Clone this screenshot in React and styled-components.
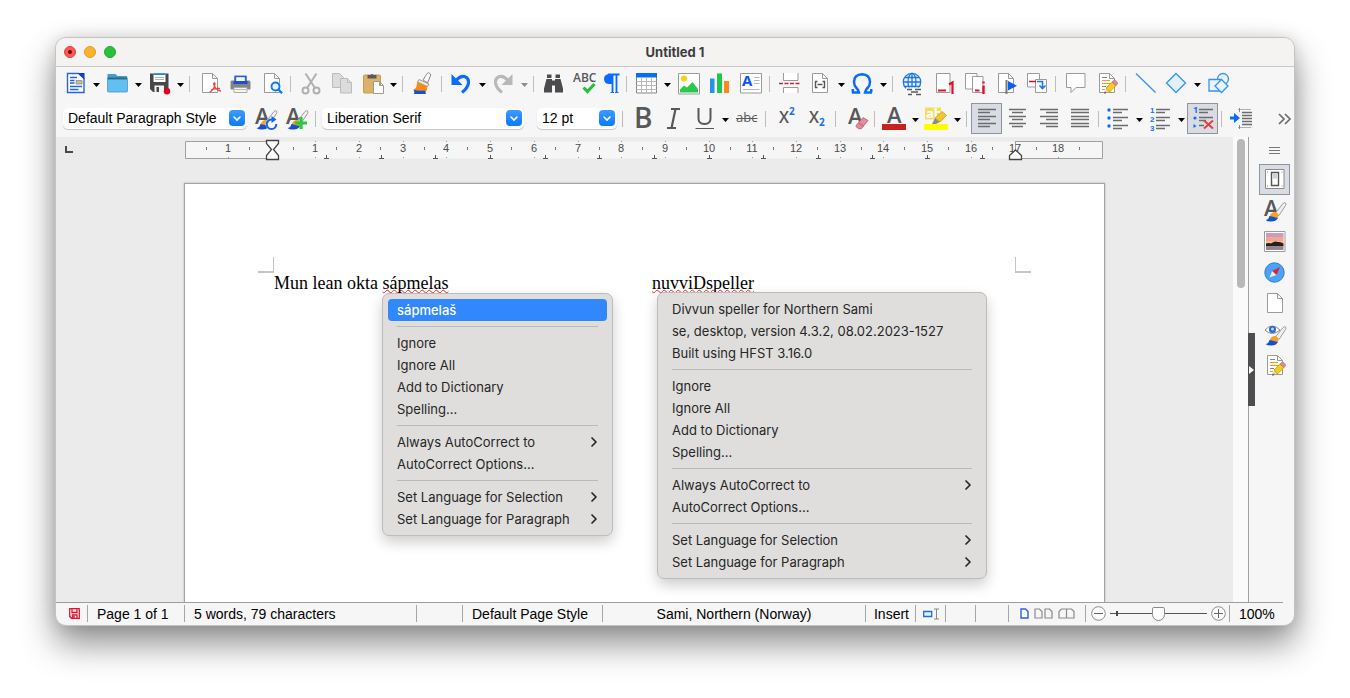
import React from "react";
import styled, { createGlobalStyle, css } from "styled-components";

const ui = `"Liberation Sans", Arial, sans-serif`;
const system = `Inter, "Liberation Sans", sans-serif`;
const glyph = `"Open Sans", "Noto Sans", sans-serif`;

const GlobalStyle = createGlobalStyle`
  *, *::before, *::after { box-sizing: border-box; }
  body { margin: 0; background: #fff; font-family: ${ui}; color: #000; }
  button, select, input { font: inherit; color: inherit; margin: 0; padding: 0; }
`;

const Desktop = styled.div`
  min-height: 100vh;
  padding: 37px 55px 73px;
  display: flex;
  overflow: hidden;
`;

const Window = styled.div`
  flex: 1;
  min-width: 0;
  display: flex;
  flex-direction: column;
  border: 1px solid #c3c3c3;
  border-radius: 11px;
  background: #f6f6f6;
  overflow: hidden;
  box-shadow: 0 18px 34px rgba(0, 0, 0, 0.44), 0 0 16px rgba(0, 0, 0, 0.12);
`;

const TitleBar = styled.header`
  height: 29px;
  flex: none;
  padding: 0 8px;
  display: grid;
  grid-template-columns: 1fr auto 1fr;
  align-items: center;
  background: #f4f3f1;
  border-bottom: 1px solid #c9c8c7;
`;

const Title = styled.h1`
  margin: 0;
  font: 700 13px/18px ${system};
  color: #3d3d3d;
`;

const Lights = styled.div`
  display: flex;
  gap: 8px;
`;

const Light = styled.button`
  width: 12px;
  height: 12px;
  border-radius: 50%;
  border: 1px solid ${(p) => p.$edge};
  background: ${(p) => p.$fill};
  display: grid;
  place-items: center;
  &::after {
    content: "";
    width: 4px;
    height: 4px;
    border-radius: 50%;
    background: ${(p) => p.$dot || "transparent"};
  }
`;

const Toolbar = styled.div`
  flex: none;
  height: ${(p) => (p.$tall ? 37 : 33)}px;
  padding: 0 0 0 4px;
  display: flex;
  align-items: center;
  background: #f6f6f6;
`;

const ToolButton = styled.button`
  flex: none;
  width: ${(p) => (p.$narrow ? 23 : 31)}px;
  height: 31px;
  display: grid;
  place-items: center;
  border: 1px solid transparent;
  background: none;
  ${(p) => p.$narrow && css`border-width: 0;`}
  ${(p) => p.$active && css`
    background: #d9dde3;
    border-color: #8f939b;
  `}
`;

const ArrowButton = styled.button`
  flex: none;
  width: 11px;
  height: 31px;
  padding-right: 1px;
  display: grid;
  place-items: center;
  border: 0;
  background: none;
  color: ${(p) => (p.$off ? "#8c8c8c" : "#000")};
`;

const Divider = styled.span`
  flex: none;
  width: 1px;
  height: 16px;
  margin: 0 4px 0 3px;
  background: #bdbdbd;
`;

const Picture = styled.svg`
  display: block;
  overflow: visible;
`;

const ComboBox = styled.label`
  flex: none;
  position: relative;
  display: flex;
  width: ${(p) => p.$width}px;
  margin: 0 ${(p) => p.$after}px 0 ${(p) => p.$before}px;
`;

const Select = styled.select`
  appearance: none;
  width: 100%;
  height: 21px;
  padding: 0 20px 1px 5px;
  border: 0;
  border-radius: 5px;
  background: #fff;
  box-shadow: 0 1px 1px rgba(0, 0, 0, 0.2);
  font-size: 14px;
`;

const Stepper = styled.span`
  position: absolute;
  right: 2px;
  top: 2px;
  width: 16px;
  height: 16px;
  border-radius: 4px;
  background: linear-gradient(#3d9bff, #0a7aff);
  display: grid;
  place-items: center;
  pointer-events: none;
`;

const Overflow = styled.button`
  width: 18px;
  height: 31px;
  margin-left: auto;
  display: grid;
  place-items: center;
  border: 0;
  background: none;
`;

const Workspace = styled.div`
  flex: 1;
  min-height: 465px;
  display: flex;
`;

const Canvas = styled.main`
  flex: 1;
  min-width: 0;
  position: relative;
  display: flex;
  flex-direction: column;
  align-items: center;
  background: #ebebeb;
  overflow: hidden;
`;

const TabCorner = styled.button`
  position: absolute;
  left: 9px;
  top: 9px;
  width: 8px;
  height: 7px;
  border: solid #4a4a4a;
  border-width: 0 0 2px 2px;
  background: none;
`;

const RulerStrip = styled.div`
  flex: none;
  width: 919px;
  max-width: 100%;
  height: 46px;
  padding-top: 3px;
`;

const Page = styled.article`
  position: relative;
  flex: 1;
  width: 921px;
  max-width: 100%;
  padding: 73px 73px 0;
  border: 1px solid #a3a3a3;
  border-bottom: 0;
  background: #fff;
  box-shadow: 0 0 2px rgba(0, 0, 0, 0.25);
`;

const Corners = styled.div`
  display: flex;
  justify-content: space-between;
`;

const Corner = styled.span`
  width: 16px;
  height: 16px;
  border: solid #c4c4c4;
  border-width: ${(p) => (p.$right ? "0 0 2px 1px" : "0 1px 2px 0")};
`;

const TextLine = styled.p`
  margin: 0 16px;
  display: grid;
  grid-template-columns: 378px 1fr;
  font: 18px/20px "Liberation Serif", "Times New Roman", serif;
`;

const Misspelled = styled.span`
  text-decoration: underline wavy #f02c2c 1px;
  text-underline-offset: 0;
  text-decoration-skip-ink: none;
`;

const Menu = styled.div`
  position: absolute;
  left: ${(p) => p.$left}px;
  top: ${(p) => p.$top}px;
  width: ${(p) => p.$width}px;
  padding: 5px;
  border: 1px solid #bdbcbb;
  border-radius: 7px;
  background: #dfdedd;
  box-shadow: 0 6px 14px rgba(0, 0, 0, 0.2);
  font: 13px/22px ${system};
`;

const MenuItem = styled.button`
  width: 100%;
  height: 22px;
  padding: 0 9px;
  display: flex;
  align-items: center;
  justify-content: space-between;
  border: 0;
  border-radius: 4px;
  text-align: left;
  white-space: nowrap;
  background: ${(p) => (p.$selected ? "#3188fd" : "none")};
  color: ${(p) => (p.$selected ? "#fff" : "#262626")};
  font-weight: ${(p) => (p.$selected ? 500 : 400)};
`;

const MenuRule = styled.hr`
  height: 1px;
  margin: 5px 9px;
  border: 0;
  background: #bbbab9;
`;

const ScrollTrack = styled.div`
  flex: none;
  width: 16px;
  padding: 2px 4px;
  background: #fafafa;
  border-right: 1px solid #a0a0a0;
`;

const ScrollThumb = styled.div`
  width: 8px;
  height: 149px;
  border-radius: 4px;
  background: #b8b8b8;
`;

const Sidebar = styled.aside`
  flex: none;
  display: flex;
  background: #f6f6f6;
`;

const Handle = styled.button`
  align-self: center;
  width: 7px;
  height: 73px;
  margin-left: -1px;
  border: 0;
  background: #4d4d4f;
  display: grid;
  place-items: center;
`;

const Deck = styled.nav`
  padding: 0 4px;
  display: flex;
  flex-direction: column;
`;

const DeckMenu = styled.button`
  width: 31px;
  height: 27px;
  display: grid;
  place-items: center;
  border: 0;
  background: none;
`;

const StatusBar = styled.footer`
  flex: none;
  height: 23px;
  margin-right: 11px;
  padding-top: 2px;
  border-top: 1px solid #9d9d9d;
  display: flex;
  align-items: flex-start;
  font-size: 14px;
  line-height: 18px;
  white-space: nowrap;
`;

const Cell = styled.div`
  flex: ${(p) => p.$grow || 0} 0 ${(p) => p.$width}px;
  height: 17px;
  padding-left: ${(p) => (p.$center ? p.$inset || 0 : 9)}px;
  display: flex;
  align-items: center;
  justify-content: ${(p) => (p.$center ? "center" : "flex-start")};
  gap: ${(p) => p.$gap || 0}px;
  border-right: ${(p) => (p.$last ? 0 : 1)}px solid #a6a6a6;
`;

const PlainButton = styled.button`
  display: grid;
  place-items: center;
  border: 0;
  background: none;
`;

const Zoom = styled.input`
  appearance: none;
  width: 97px;
  height: 15px;
  background:
    linear-gradient(#444, #444) 6px 50% / 2px 5px no-repeat,
    linear-gradient(#555, #555) 0 50% / 100% 1px no-repeat;
  &::-webkit-slider-thumb {
    appearance: none;
    width: 13px;
    height: 14px;
    border: 1px solid #8a8a8a;
    border-radius: 2px 2px 7px 7px;
    background: #fdfdfd;
  }
`;

const GRAY = "#9b9b9b";
const DARK = "#58585a";
const BLUE = "#0a6cff";
const PAPER = "M4.5 1.5h10l5 5v14h-15z M14.5 1.5v5h5";

const Letter = ({ x, y, size, fill = DARK, weight = 400, style, family = glyph, children }) => (
  <text x={x} y={y} fontSize={size} fill={fill} stroke="none" fontWeight={weight} fontStyle={style} fontFamily={family}>
    {children}
  </text>
);

const Pencil = () => (
  <g stroke="none">
    <path d="M9.500 21l1.500-5 4 3.500z" fill="#e9d3a5" />
    <path d="M11 16l6-6 4 3.500-6.500 6.500z" fill="#f7cd18" stroke="#b8960e" strokeWidth=".7" />
    <path d="M17 10l1.500-1.500q1.500-.7 3 .7t.8 2.900L21 13.500z" fill="#e58a9b" stroke="#b5606f" strokeWidth=".6" />
    <path d="M9 21.800l.8-2.600 1.900 1.700z" fill="#555" />
  </g>
);

const Brush = () => (
  <g>
    <path d="M12.500 14L20 4.500q1.500-1.500 2.500-.5t0 2.500L16 16.500z" fill="#f0f0f0" stroke={GRAY} />
    <path d="M6.500 18q1.500-5.500 6-5 4 1.500 2.500 6z" fill="#f9a11f" />
    <path d="M2.500 21q3-.2 4-4l8.500 2q-2 3.500-6.500 3.500-4 .2-6-1.500z" fill="#1650d0" />
  </g>
);

const Lines = ({ rows, stroke = "#6c6c6e" }) => (
  <g stroke={stroke} strokeWidth="1.300">
    {rows.map(([a, b, y]) => (
      <path key={`${a}-${y}`} d={`M${a} ${y}H${b}`} />
    ))}
  </g>
);

const ICONS = {
  newDoc: (
    <g stroke="#2563e0">
      <path d="M3.500 1.500h11l5.500 5v14h-16.500z" fill="#fff" strokeWidth="1.400" />
      <path d="M14 1h6.500v6.500z" fill="#0d3fc4" stroke="none" />
      <path d="M6 5.500h7M6 8.500h4.500M6 11h4.500M6 14.500h12M6 17.500h8.500" strokeWidth="1.300" />
      <path d="M12 8.500h6v3.500h-6z" fill="#d3bd86" stroke="#7a8aa6" strokeWidth=".8" />
    </g>
  ),
  folder: (
    <g>
      <path d="M1.500 2h8l2 2h9.500v4h-19.500z" fill="#3f9fd0" />
      <path d="M1.500 5.500h20v2h-20z" fill="#34677f" />
      <path d="M1.500 7.500h20v11.500q0 1-1 1h-18q-1 0-1-1z" fill="#62bff2" stroke="#4598c9" strokeWidth=".8" />
    </g>
  ),
  save: (
    <g>
      <path d="M2 1.500h18.500v18.500h-15.500l-3-3z" fill="#47474a" />
      <path d="M5.500 1.500h12v8.500h-12z" fill="#fff" />
      <path d="M5.500 1.200h12v1.800h-12z" fill="#1887e0" />
      <path d="M7 5.500h9M7 7.500h9" stroke="#b5b5b5" />
      <path d="M6.500 13.500h9.500v6.500h-9.500z" fill="#f2f2f2" />
      <path d="M8.500 15h2.500v5h-2.500z" fill="#47474a" />
      <circle cx="19" cy="19.300" r="3.200" fill="#e3001f" />
    </g>
  ),
  pdf: (
    <g>
      <path d={PAPER} fill="#fff" stroke={GRAY} />
      <path d="M11.500 20.500q5-3.500 5.500-8.500 0-1.500-1-1t.5 3q1.500 4 6.500 5M13 18q4-2 9-1.500" stroke="#ee4444" strokeWidth="1.300" />
    </g>
  ),
  print: (
    <g>
      <path d="M6 4.500h11v6h-11z" fill="#fff" stroke="#2563e0" strokeWidth="1.400" />
      <path d="M2.500 8.500h17.500q1.500 0 1.500 1.500v6.500q0 1-1 1h-18q-1 0-1-1V10q0-1.500 1-1.500z" fill="#858588" />
      <path d="M6 4.500h11v5h-11z" fill="#fff" />
      <path d="M6.500 10V4.500h10V10" stroke="#2563e0" strokeWidth="1.400" />
      <path d="M4.500 9h14v3h-14z" fill="#1d4fd0" />
      <path d="M5 15.500h13v5h-13z" fill="#f4f4f4" stroke="#aaa" />
      <path d="M6 17.500h11" stroke="#bbb" />
    </g>
  ),
  preview: (
    <g>
      <path d={PAPER} fill="#fff" stroke={GRAY} />
      <circle cx="15.500" cy="14.500" r="4" fill="#e8f4ff" stroke="#0a7aff" strokeWidth="1.900" />
      <path d="M18.500 17.500l3.500 3.800" stroke="#0a7aff" strokeWidth="2.300" />
    </g>
  ),
  cut: (
    <g stroke="#b0b0b0" strokeWidth="2">
      <circle cx="6.500" cy="18.500" r="3" />
      <circle cx="17.500" cy="18.500" r="3" />
      <path d="M6.500 1.500l9.500 14.500M17.500 1.500L8 16" />
    </g>
  ),
  copy: (
    <g fill="#dcdcdc" stroke="#bbb">
      <path d="M2.500 1.500h7l4 4v10h-11z" />
      <path d="M10.500 6.500h7l4 4v10.500h-11z" />
      <path d="M17.500 6.500v4h4" />
    </g>
  ),
  paste: (
    <g>
      <rect x="2.500" y="3" width="17" height="18" rx="1" fill="#ddb168" stroke="#c99c50" />
      <path d="M6.500 3h3q1-2 3 0h3v3.500h-9z" fill="#5a5a5c" />
      <path d="M12.500 9.500h6l4 4v8h-10z M18.500 9.500v4h4" fill="#fff" stroke={GRAY} />
    </g>
  ),
  clone: (
    <g>
      <path d="M12 8l4-6.500q1.500-1.500 3 0t.2 3L16.500 11z" fill="#fff" stroke="#888" />
      <path d="M8 7.500l10 4.500-1.500 2.500L6.500 10z" fill="#ececec" stroke="#888" strokeWidth=".8" />
      <path d="M6.500 10l10 4.500q0 4-2.500 6.500H5q-2-1-2-3 3-3 3.500-8z" fill="#f98b12" />
      <path d="M2.500 17.500q4 2 11.500 1l1 3.500h-12q1-2-.5-4.500z" fill="#1650d8" />
    </g>
  ),
  undo: (
    <g>
      <path d="M6 8.500Q10 3.500 14.500 4.500q4.500 1.500 4 6.500-1 5.500-6.500 9.500" stroke={BLUE} strokeWidth="3.200" />
      <path d="M1.500 2v11h11z" fill={BLUE} />
    </g>
  ),
  redo: (
    <g>
      <path d="M16 8.500Q12 3.500 7.500 4.500q-4.500 1.500-4 6.500 1 5.500 6.500 9.500" stroke="#b8b8b8" strokeWidth="3.200" />
      <path d="M20.500 2v11h-11z" fill="#b8b8b8" />
    </g>
  ),
  find: (
    <g fill="#4b4b4e">
      <path d="M5 2.500h4.500v3.500h-4.500zM13.500 2.500H18v3.500h-4.500z" />
      <path d="M4.500 7h5.500v13.500H2v-4zM13 7h5.500L21 16.500v4h-8z" />
      <path d="M10 8.500h3v5h-3z" />
    </g>
  ),
  spelling: (
    <g>
      <Letter x="0" y="10" size="12" weight="600">ABC</Letter>
      <path d="M10.500 15.500l4 4 7-7.500" stroke="#23c03a" strokeWidth="3" />
    </g>
  ),
  pilcrow: (
    <g>
      <path d="M12 2H9Q4 2.500 4 7 4 12 9.500 12H12z" fill={BLUE} />
      <path d="M8 2.500h11.500M12.500 2.500v18M16.500 2.500v18" stroke={BLUE} strokeWidth="1.800" />
      <path d="M10.500 20.500h3.500M15 20.500h3.500" stroke={BLUE} />
    </g>
  ),
  table: (
    <g>
      <path d="M1.500 1.500h20v19.500h-20z" fill="#fff" stroke="#88888a" />
      <path d="M1 1h21v4.500H1z" fill="#0a6cff" />
      <path d="M1.500 9.500h20M1.500 13.500h20M1.500 17.500h20M6.500 5v16M11.500 5v16M16.500 5v16" stroke="#b9b9b9" />
    </g>
  ),
  image: (
    <g>
      <path d="M1.500 1.500h21v20.500h-21z" fill="#fff" stroke={GRAY} />
      <circle cx="7" cy="6.500" r="3" fill="#ffcf08" />
      <path d="M3 20.500v-3l4-4 3 2 5.500-5.500 5.500 7v3.500z" fill="#2cc84a" />
    </g>
  ),
  chart: (
    <g>
      <path d="M2 6.500h4.500v14.500H2z" fill="#2492e8" />
      <path d="M9 1.500h5v19.500H9z" fill="#1fc845" />
      <path d="M16 9h5v12h-5z" fill="#f98b1e" />
    </g>
  ),
  textBox: (
    <g>
      <path d="M1.500 1.500h21v19.500h-21z" fill="#fff" stroke={GRAY} />
      <Letter x="3" y="14" size="15" weight="700" fill="#0a55e8">A</Letter>
      <path d="M15 5.500h5.500M15 8.500h5.500M15 11.500h5.500M4 17.500h16.500" stroke="#b5b5b5" />
    </g>
  ),
  pageBreak: (
    <g stroke={GRAY}>
      <path d="M5.500 1v7.500h14.500v-7.500M5.500 21v-5.500h14.500v5.500" fill="#fff" />
      <path d="M1 11.500h22" stroke="#dc1c3c" strokeWidth="1.400" strokeDasharray="4 1.500" />
    </g>
  ),
  field: (
    <g>
      <path d="M3.500 1.500h10l5 5v14h-15z M13.500 1.500v5h5" fill="#fff" stroke={GRAY} />
      <path d="M8.500 9.500H6.500v6h2M13.500 9.500h2v6h-2M8.500 12.500h5" stroke="#555" strokeWidth="1.400" />
    </g>
  ),
  omega: (
    <path
      d="M1 20.500h7q-.5-2.500-2.500-4.500Q3 13.500 3 10q0-7.500 8-7.800 8 .3 8 7.800 0 3.500-2.500 6-2 2-2.500 4.500h7M1.800 17v3.500M20.200 17v3.500"
      stroke={BLUE}
      strokeWidth="2.500"
    />
  ),
  link: (
    <g stroke="#1e74e0" strokeWidth="1.300">
      <circle cx="11" cy="10" r="8.700" fill="#e6f2ff" />
      <ellipse cx="11" cy="10" rx="4" ry="8.700" />
      <path d="M2.500 10h17M4 5.500h14M4 14.500h14M11 1.500v17" />
      <path d="M5 15.500h18v8h-18z" fill="#f6f6f6" stroke="none" />
      <path d="M6 17.500h5M14 17.500h6M10 20h7M7 22.500h4M15 22.500h5" stroke="#5c5c5e" strokeWidth="1.600" />
    </g>
  ),
  footnote: (
    <g>
      <path d="M4.500 1.500h13.500v19H4.500z" fill="#fff" stroke={GRAY} />
      <path d="M6 18.500h8" stroke="#e0102c" strokeWidth="1.800" />
      <path d="M17 12.500l3.500-2v11.500" stroke="#e0102c" strokeWidth="2.200" />
    </g>
  ),
  endnote: (
    <g>
      <path d="M2.500 1.500h11.500v15.500h-11.500z" fill="#fff" stroke={GRAY} />
      <path d="M9.500 4.500h10.500v16h-10.500z" fill="#fff" stroke={GRAY} />
      <path d="M12 18.500h4.500" stroke="#e0102c" strokeWidth="1.800" />
      <path d="M20.500 9.500v2M20.500 13.500v8.500" stroke="#e0102c" strokeWidth="2.400" />
    </g>
  ),
  bookmark: (
    <g>
      <path d={PAPER} fill="#fff" stroke={GRAY} />
      <path d="M12.500 8v14" stroke="#77777a" strokeWidth="2" />
      <path d="M14 9l9 4.800-9 4.700z" fill="#0a5ff0" />
    </g>
  ),
  crossRef: (
    <g>
      <path d="M2.500 1.500h12v13.500h-12z" fill="#fff" stroke={GRAY} />
      <path d="M10.500 7.500h11v13h-11z" fill="#fff" stroke={GRAY} />
      <path d="M4 9.500h7" stroke="#e0102c" strokeWidth="1.600" />
      <path d="M12 9.500h5.500v6M14.500 13.500l3 3 3-3" stroke="#1279e8" strokeWidth="1.600" />
    </g>
  ),
  comment: <path d="M2.500 1.500h18.500v14h-9l-5 5v-5h-4.500z" fill="#fff" stroke={GRAY} />,
  track: (
    <g>
      <path d={PAPER} fill="#fff" stroke={GRAY} />
      <path d="M7 5.500h5M7 14.500h4" stroke="#888" />
      <path d="M7 8.500h8M7 11.500h10M7 17.500h3" stroke="#f79a2b" strokeWidth="1.200" />
      <Pencil />
    </g>
  ),
  line: <path d="M2 1.500l19.500 19" stroke="#3592f0" strokeWidth="1.300" />,
  diamond: <path d="M11 1.500l9.500 9.500-9.500 9.500L1.500 11z" fill="#e3f1ff" stroke="#3592f0" strokeWidth="1.300" />,
  shapes: (
    <g fill="#e8f4ff" stroke="#3592f0" strokeWidth="1.300">
      <circle cx="16" cy="7" r="5.500" />
      <path d="M2 7.500h11.500v11.500H2z" />
      <path d="M14.500 7.500l6.500 6.500-6.500 6.500L8 14z" />
    </g>
  ),
  updateStyle: (
    <g>
      <Letter x="1" y="17" size="22" weight="600">A</Letter>
      <Brush />
      <circle cx="17.500" cy="17" r="6" fill="#f6f6f6" />
      <path d="M18 12.500a4.800 4.800 0 1 0 4.300 4.500" stroke="#1668e8" strokeWidth="2" />
      <path d="M17.500 9l5 3.500-5 3.500z" fill="#1668e8" />
    </g>
  ),
  newStyle: (
    <g>
      <Letter x="1" y="17" size="22" weight="600">A</Letter>
      <Brush />
      <path d="M16 10v12M10 16h12" stroke="#2bc840" strokeWidth="3.200" />
    </g>
  ),
  bold: <Letter x="3" y="21" size="28" weight="600">B</Letter>,
  italic: (
    <path d="M9 2h9M5 21h9M13.500 2L9.500 21" stroke={DARK} strokeWidth="2.200" />
  ),
  underline: (
    <g>
      <path d="M5.500 1v10.500q0 5.500 6 5.500t6-5.500V1" stroke={DARK} strokeWidth="2" />
      <path d="M2.500 21.500h18.500" stroke={DARK} strokeWidth="1.200" />
    </g>
  ),
  strike: (
    <g>
      <Letter x="1" y="15" size="13">abc</Letter>
      <path d="M1 11.500h21.500" stroke={DARK} strokeWidth="1.200" />
    </g>
  ),
  superscript: (
    <g>
      <Letter x="5" y="16" size="16" weight="600">X</Letter>
      <Letter x="15" y="8" size="10" weight="700" fill="#1673e8">2</Letter>
    </g>
  ),
  subscript: (
    <g>
      <Letter x="4" y="16" size="16" weight="600">X</Letter>
      <Letter x="14" y="19" size="10" weight="700" fill="#1673e8">2</Letter>
    </g>
  ),
  clear: (
    <g>
      <Letter x="4" y="17" size="22" weight="600">A</Letter>
      <path d="M12.500 18l6.500-7.500 5 3-6.500 8q-1.500 1-4-.5t-1-3z" fill="#e58a9b" stroke="#b5606f" strokeWidth=".8" />
      <path d="M14.500 16l5 3.300" stroke="#b5606f" />
    </g>
  ),
  fontColor: (
    <g>
      <Letter x="4" y="16" size="22" weight="600">A</Letter>
      <path d="M-1 17h24v6H-1z" fill="#c9211e" />
    </g>
  ),
  highlight: (
    <g>
      <path d="M0 .5h16v12H0z" fill="#f5dc62" />
      <Letter x="1" y="11" size="13" weight="700" fill="#fff">ab</Letter>
      <path d="M-1 17h24v6H-1z" fill="#ffff00" />
      <path d="M7 17l3-6 5 4-4 2z" fill="#8c8c8c" />
      <path d="M10 11l7-6.500 4.500 4L15 15z" fill="#f4c531" stroke="#c99a1c" strokeWidth=".8" />
    </g>
  ),
  alignLeft: <Lines rows={[[3, 21, 2.5], [3, 15, 5.5], [3, 21, 9.5], [3, 15, 12.5], [3, 21, 16.5], [3, 15, 19.5]]} />,
  alignCenter: <Lines rows={[[3, 20, 2.5], [6, 17, 5.5], [3, 20, 9.5], [6, 17, 12.5], [3, 20, 16.5], [6, 17, 19.5]]} />,
  alignRight: <Lines rows={[[3, 21, 2.5], [9, 21, 5.5], [3, 21, 9.5], [9, 21, 12.5], [3, 21, 16.5], [9, 21, 19.5]]} />,
  justify: <Lines rows={[[3, 21, 2.5], [3, 21, 5.5], [3, 21, 9.5], [3, 21, 12.5], [3, 21, 16.5], [3, 21, 19.5]]} />,
  bullets: (
    <g>
      <Lines rows={[[6, 21, 2.5], [6, 15, 5.5], [6, 21, 10.5], [6, 15, 13.5], [6, 21, 18.5], [6, 15, 21.5]]} />
      <g fill={BLUE}>
        <circle cx="2" cy="3" r="1.700" /><circle cx="2" cy="11" r="1.700" /><circle cx="2" cy="19" r="1.700" />
      </g>
    </g>
  ),
  numbers: (
    <g>
      <Lines rows={[[7, 21, 2.5], [7, 16, 5.5], [7, 21, 10.5], [7, 16, 13.5], [7, 21, 18.5], [7, 16, 21.5]]} />
      <Letter x="1" y="6" size="8" weight="700" fill="#1673e8" family={ui}>1</Letter>
      <Letter x="1" y="15" size="8" weight="700" fill="#1673e8" family={ui}>2</Letter>
      <Letter x="1" y="24" size="8" weight="700" fill="#1673e8" family={ui}>3</Letter>
    </g>
  ),
  noList: (
    <g>
      <Lines rows={[[8, 22, 2.5], [8, 17, 5.5], [8, 22, 10.5], [8, 15, 13.5], [8, 13, 18.5]]} />
      <Letter x="2" y="6" size="9" weight="700" fill="#1673e8">1</Letter>
      <circle cx="4" cy="11" r="1.600" fill={BLUE} />
      <path d="M2.500 17l3 2-3 2z" fill={BLUE} />
      <path d="M13 13.500l9 8M22 13.500l-9 8" stroke="#ee3a3a" strokeWidth="1.900" />
    </g>
  ),
  indent: (
    <g>
      <path d="M8 2.500h13M8 20.500h13" stroke="#b0b0b0" />
      <Lines rows={[[12, 22, 5.5], [12, 22, 8.5], [12, 22, 11.5], [12, 22, 14.5], [12, 22, 17.5]]} />
      <path d="M9.500 1v4M9.500 18v4" stroke="#888" />
      <path d="M0 9.500h4v-3.500l6 5-6 5v-3.500h-4z" fill={BLUE} />
    </g>
  ),
  properties: (
    <g stroke="#8a8a8c">
      <path d="M2.500 1.500h18.500v19h-18.500z" fill="#fff" />
      <path d="M8.500 4.500h7v13h-7z" fill="#fff" stroke="#555" strokeWidth="1.400" />
      <path d="M10 6h4v4.500h-4z" fill="#d0d0d0" stroke="none" />
      <path d="M4 4h1M18.500 4h1M4 18h1M18.500 18h1" />
    </g>
  ),
  styles: (
    <g>
      <Letter x="1" y="17" size="22" weight="600">A</Letter>
      <Brush />
    </g>
  ),
  gallery: (
    <g>
      <path d="M1.500 1.500h20.500v20h-20.500z" fill="#fff" stroke={GRAY} />
      <path d="M3 3h17.500v6H3z" fill="#c99bc4" />
      <path d="M3 7h17.500v6H3z" fill="#f3a58f" />
      <path d="M3 11h17.500v5H3z" fill="#f8bd8a" />
      <path d="M3 13.500q3-1 5 0 4-3 7-1.500 3-.5 5.500 1.500v3H3z" fill="#252022" />
      <path d="M3 16.500h17.500v3.500H3z" fill="#97848c" />
    </g>
  ),
  navigator: (
    <g>
      <circle cx="11.500" cy="11.500" r="9.700" fill="#4aa2fa" stroke="#2c7fd8" />
      <path d="M17 6l-3.500 8-4.500-4z" fill="#e0242c" />
      <path d="M6.500 16.500l2.500-6.500 4.500 4z" fill="#e8e8e8" />
    </g>
  ),
  page: <path d={PAPER} fill="#fff" stroke={GRAY} />,
  inspector: (
    <g>
      <Brush />
      <path d="M2 7q7-8 15 0-8 7-15 0z" fill="#fff" stroke="#888" />
      <circle cx="9.500" cy="6.500" r="3.500" fill="#2a66d8" />
      <circle cx="9.500" cy="6" r="1.500" fill="#bcdcff" />
    </g>
  ),
};

const Icon = ({ name }) => (
  <Picture width="23" height="23" viewBox="0 0 23 23" fill="none" aria-hidden="true">
    {ICONS[name]}
  </Picture>
);

const Tool = ({ icon, label, active, narrow }) => (
  <ToolButton type="button" aria-label={label} aria-pressed={active} $active={active} $narrow={narrow}>
    <Icon name={icon} />
  </ToolButton>
);

const More = ({ label, off }) => (
  <ArrowButton type="button" aria-label={`${label} options`} $off={off} disabled={off}>
    <Picture width="7" height="7" viewBox="0 0 7 7" aria-hidden="true">
      <path d="M0 3h7L3.500 7z" fill="currentColor" />
    </Picture>
  </ArrowButton>
);

const STANDARD = [
  ["newDoc", "New", "more"], ["folder", "Open", "more"], ["save", "Save", "more"], null,
  ["pdf", "Export as PDF"], ["print", "Print"], ["preview", "Print Preview"], null,
  ["cut", "Cut"], ["copy", "Copy"], ["paste", "Paste", "more"], null,
  ["clone", "Clone Formatting"], null,
  ["undo", "Undo", "more"], ["redo", "Redo", "off"], null,
  ["find", "Find & Replace"], ["spelling", "Spelling"], ["pilcrow", "Formatting Marks", "narrow"], null,
  ["table", "Insert Table", "more"], ["image", "Insert Image"], ["chart", "Insert Chart"], ["textBox", "Insert Text Box"], null,
  ["pageBreak", "Insert Page Break"], ["field", "Insert Field", "more"], ["omega", "Insert Special Character", "more"], null,
  ["link", "Insert Hyperlink"], ["footnote", "Insert Footnote"], ["endnote", "Insert Endnote"],
  ["bookmark", "Insert Bookmark"], ["crossRef", "Insert Cross-reference"], null,
  ["comment", "Insert Comment"], ["track", "Track Changes"], null,
  ["line", "Insert Line"], ["diamond", "Basic Shapes", "more"], ["shapes", "Show Draw Functions"],
];

const FORMATTING = [
  null,
  ["bold", "Bold"], ["italic", "Italic"], ["underline", "Underline", "more"], ["strike", "Strikethrough"], null,
  ["superscript", "Superscript"], ["subscript", "Subscript"], null,
  ["clear", "Clear Formatting"], null,
  ["fontColor", "Font Color", "more"], ["highlight", "Highlighting Color", "more"], null,
  ["alignLeft", "Align Left", "active"], ["alignCenter", "Align Center"], ["alignRight", "Align Right"], ["justify", "Justified"], null,
  ["bullets", "Unordered List", "more"], ["numbers", "Ordered List", "more"], ["noList", "No List", "active"], null,
  ["indent", "Increase Indent"],
];

const Tools = ({ items }) =>
  items.map((item, i) => {
    if (!item) return <Divider key={i} />;
    const [icon, label, kind] = item;
    return (
      <React.Fragment key={i}>
        <Tool icon={icon} label={label} active={kind === "active" || undefined} narrow={kind === "narrow"} />
        {(kind === "more" || kind === "off") && <More label={label} off={kind === "off"} />}
      </React.Fragment>
    );
  });

const Combo = ({ label, value, width, before = 0, after = 0 }) => (
  <ComboBox $width={width} $before={before} $after={after}>
    <Select aria-label={label} defaultValue={value}>
      <option>{value}</option>
    </Select>
    <Stepper>
      <Picture width="8" height="5" viewBox="0 0 8 5" fill="none" aria-hidden="true">
        <path d="M1 1l3 3 3-3" stroke="#fff" strokeWidth="1.600" strokeLinecap="round" />
      </Picture>
    </Stepper>
  </ComboBox>
);

const CM = 43.7;
const ZERO = 86.6;
const numbers = Array.from({ length: 20 }, (_, i) => i - 1);

const Ruler = () => (
  <Picture width="919" height="21" viewBox="0 0 919 21" fill="none" aria-hidden="true">
    <path d="M.5 1.500h917v17H.5z" fill="#f6f6f6" />
    <path d="M87.500 1.500H.5v17h87M830.500 1.500h87v17h-87z" stroke="#a0a0a0" />
    {numbers.map((n) => {
      const x = Math.round(ZERO + n * CM);
      const half = Math.round(x + CM / 2) - 0.5;
      return (
        <g key={n}>
          {n !== 0 && n < 19 && (
            <text x={x} y="12" textAnchor="middle" fontSize="11" fill="#4a4a4a" fontFamily={ui}>{Math.abs(n)}</text>
          )}
          {n !== 0 && n < 19 && <path d={`M${x + 0.5} 1v1M${x + 0.5} 17v1`} stroke="#999" />}
          {n < 19 && <path d={`M${half} 7v3`} stroke="#777" />}
        </g>
      );
    })}
    <path d="M21.500 7v3" stroke="#777" />
    {Array.from({ length: 13 }, (_, i) => Math.round(ZERO + 1 + (i + 1) * CM * 1.25)).map((x) => (
      <path key={x} d={`M${x - 3} 18.500h5M${x - 0.5} 15v3`} stroke="#555" />
    ))}
    <path d="M81.500.5h12v3l-5 6 5 6v4h-12v-4l5-6-5-6z" fill="#fff" stroke="#444" strokeWidth="1.300" />
    <path d="M824.500 19.500v-4l6-5.500 6 5.500v4z" fill="#fff" stroke="#444" strokeWidth="1.300" />
  </Picture>
);

const COMMON = [
  null,
  ["Ignore"], ["Ignore All"], ["Add to Dictionary"], ["Spelling..."],
  null,
  ["Always AutoCorrect to", "sub"], ["AutoCorrect Options..."],
  null,
  ["Set Language for Selection", "sub"], ["Set Language for Paragraph", "sub"],
];

const ContextMenu = ({ items, label, ...place }) => (
  <Menu role="menu" aria-label={label} {...place}>
    {[...items, ...COMMON].map((item, i) =>
      item ? (
        <MenuItem key={i} type="button" role="menuitem" $selected={item[1] === "selected"}>
          {item[0]}
          {item[1] === "sub" && (
            <Picture width="8" height="10" viewBox="0 0 8 10" fill="none" aria-hidden="true">
              <path d="M2 1l4 4-4 4" stroke="#262626" strokeWidth="1.700" strokeLinecap="round" strokeLinejoin="round" />
            </Picture>
          )}
        </MenuItem>
      ) : (
        <MenuRule key={i} />
      )
    )}
  </Menu>
);

const SIDEBAR = [
  ["properties", "Properties", true], ["styles", "Styles"], ["gallery", "Gallery"], ["navigator", "Navigator"],
  ["page", "Page"], ["inspector", "Style Inspector"], ["track", "Manage Changes"],
];

const RoundButton = ({ plus }) => (
  <PlainButton type="button" aria-label={plus ? "Zoom in" : "Zoom out"}>
    <Picture width="15" height="15" viewBox="0 0 15 15" fill="none" aria-hidden="true">
      <circle cx="7.500" cy="7.500" r="6.800" fill="#fff" stroke="#8a8a8a" />
      <path d={plus ? "M3 7.500h9M7.500 3v9" : "M3 7.500h9"} stroke="#666" />
    </Picture>
  </PlainButton>
);

export default function App() {
  return (
    <Desktop>
      <GlobalStyle />
      <Window>
        <TitleBar>
          <Lights>
            <Light type="button" aria-label="Close" $fill="#fb5650" $edge="#e1443e" $dot="#6d0a06" />
            <Light type="button" aria-label="Minimize" $fill="#fcb32b" $edge="#e29f22" />
            <Light type="button" aria-label="Zoom window" $fill="#28c13c" $edge="#1fab2f" />
          </Lights>
          <Title>Untitled 1</Title>
        </TitleBar>

        <Toolbar role="toolbar" aria-label="Standard">
          <Tools items={STANDARD} />
        </Toolbar>

        <Toolbar role="toolbar" aria-label="Formatting" $tall>
          <Combo label="Paragraph style" value="Default Paragraph Style" width={184} before={3} after={3} />
          <Tool icon="updateStyle" label="Update Style" />
          <Tool icon="newStyle" label="New Style" />
          <Divider />
          <Combo label="Font name" value="Liberation Serif" width={202} before={2} after={13} />
          <Combo label="Font size" value="12 pt" width={80} after={2} />
          <Tools items={FORMATTING} />
          <Overflow type="button" aria-label="More tools">
            <Picture width="14" height="12" viewBox="0 0 14 12" fill="none" aria-hidden="true">
              <path d="M1 1l5 5-5 5M7 1l5 5-5 5" stroke="#6c6c6e" strokeWidth="1.700" />
            </Picture>
          </Overflow>
        </Toolbar>

        <Workspace>
          <Canvas>
            <TabCorner type="button" aria-label="Tab type" />
            <RulerStrip>
              <Ruler />
            </RulerStrip>
            <Page>
              <Corners>
                <Corner />
                <Corner $right />
              </Corners>
              <TextLine>
                <span>Mun lean okta <Misspelled>sápmelas</Misspelled></span>
                <span><Misspelled>nuvviDspeller</Misspelled></span>
              </TextLine>
              <ContextMenu
                label="sápmelas"
                $left={197}
                $top={109}
                $width={231}
                items={[["sápmelaš", "selected"]]}
              />
              <ContextMenu
                label="nuvviDspeller"
                $left={472}
                $top={108}
                $width={330}
                items={[
                  ["Divvun speller for Northern Sami"],
                  ["se, desktop, version 4.3.2, 08.02.2023-1527"],
                  ["Built using HFST 3.16.0"],
                ]}
              />
            </Page>
          </Canvas>
          <ScrollTrack>
            <ScrollThumb />
          </ScrollTrack>
          <Sidebar>
            <Handle type="button" aria-label="Hide sidebar">
              <Picture width="5" height="8" viewBox="0 0 5 8" aria-hidden="true">
                <path d="M0 0l5 4-5 4z" fill="#fff" />
              </Picture>
            </Handle>
            <Deck aria-label="Sidebar">
              <DeckMenu type="button" aria-label="Sidebar settings">
                <Picture width="11" height="9" viewBox="0 0 11 9" fill="none" aria-hidden="true">
                  <path d="M0 1.500h11M0 4.500h11M0 7.500h11" stroke="#77777a" />
                </Picture>
              </DeckMenu>
              {SIDEBAR.map(([icon, label, active]) => (
                <Tool key={icon} icon={icon} label={label} active={active} />
              ))}
            </Deck>
          </Sidebar>
        </Workspace>

        <StatusBar>
          <Cell $width={32} $center $inset={5}>
            <PlainButton type="button" aria-label="Document modified">
              <Picture width="11" height="11" viewBox="0 0 11 11" fill="none" aria-hidden="true">
                <path d="M.7.7h9.600v9.600H2.500L.7 8.500zM3 .7v3.800h5V.7M3.500 10V7h4.500v3M5 8v2" stroke="#e8112d" strokeWidth="1.300" />
              </Picture>
            </PlainButton>
          </Cell>
          <Cell $width={97}>Page 1 of 1</Cell>
          <Cell $width={232} $grow={1}>5 words, 79 characters</Cell>
          <Cell $width={46} />
          <Cell $width={140}>Default Page Style</Cell>
          <Cell $width={263} $grow={1} $center>Sami, Northern (Norway)</Cell>
          <Cell $width={50} $center $inset={2}>Insert</Cell>
          <Cell $width={30} $center $inset={2}>
            <PlainButton type="button" aria-label="Selection mode">
              <Picture width="17" height="12" viewBox="0 0 17 12" fill="none" aria-hidden="true">
                <path d="M.7 3.500h8v5h-8z" fill="#e3f1ff" stroke="#1673e8" strokeWidth="1.300" />
                <path d="M11 1h5M11 11h5M13.500 1v10" stroke="#888" />
              </Picture>
            </PlainButton>
          </Cell>
          <Cell $width={30} />
          <Cell $width={33} />
          <Cell $width={77} $center $gap={5}>
            <PlainButton type="button" aria-label="Single-page view">
              <Picture width="9" height="11" viewBox="0 0 9 11" fill="none" aria-hidden="true">
                <path d="M1 1h4.500l2.500 2.500v6.500h-7z" fill="#fff" stroke="#2563e0" strokeWidth="1.400" />
              </Picture>
            </PlainButton>
            <PlainButton type="button" aria-label="Multiple-page view">
              <Picture width="19" height="11" viewBox="0 0 19 11" fill="none" aria-hidden="true">
                <path d="M1 1h4.500l2.500 2.500v6.500h-7zM11 1h4.500l2.500 2.500v6.500h-7z" stroke="#8a8a8a" strokeWidth="1.200" />
              </Picture>
            </PlainButton>
            <PlainButton type="button" aria-label="Book view">
              <Picture width="17" height="11" viewBox="0 0 17 11" fill="none" aria-hidden="true">
                <path d="M8.500 1H3.500L1 3.500v6.500h7.500zM8.500 1h5l2.500 2.500v6.500h-7.500z" stroke="#8a8a8a" strokeWidth="1.200" />
              </Picture>
            </PlainButton>
          </Cell>
          <Cell $width={144} $center $gap={4} $inset={2}>
            <RoundButton />
            <Zoom type="range" min="0" max="100" defaultValue="50" aria-label="Zoom" />
            <RoundButton plus />
          </Cell>
          <Cell $width={53} $last>100%</Cell>
        </StatusBar>
      </Window>
    </Desktop>
  );
}
